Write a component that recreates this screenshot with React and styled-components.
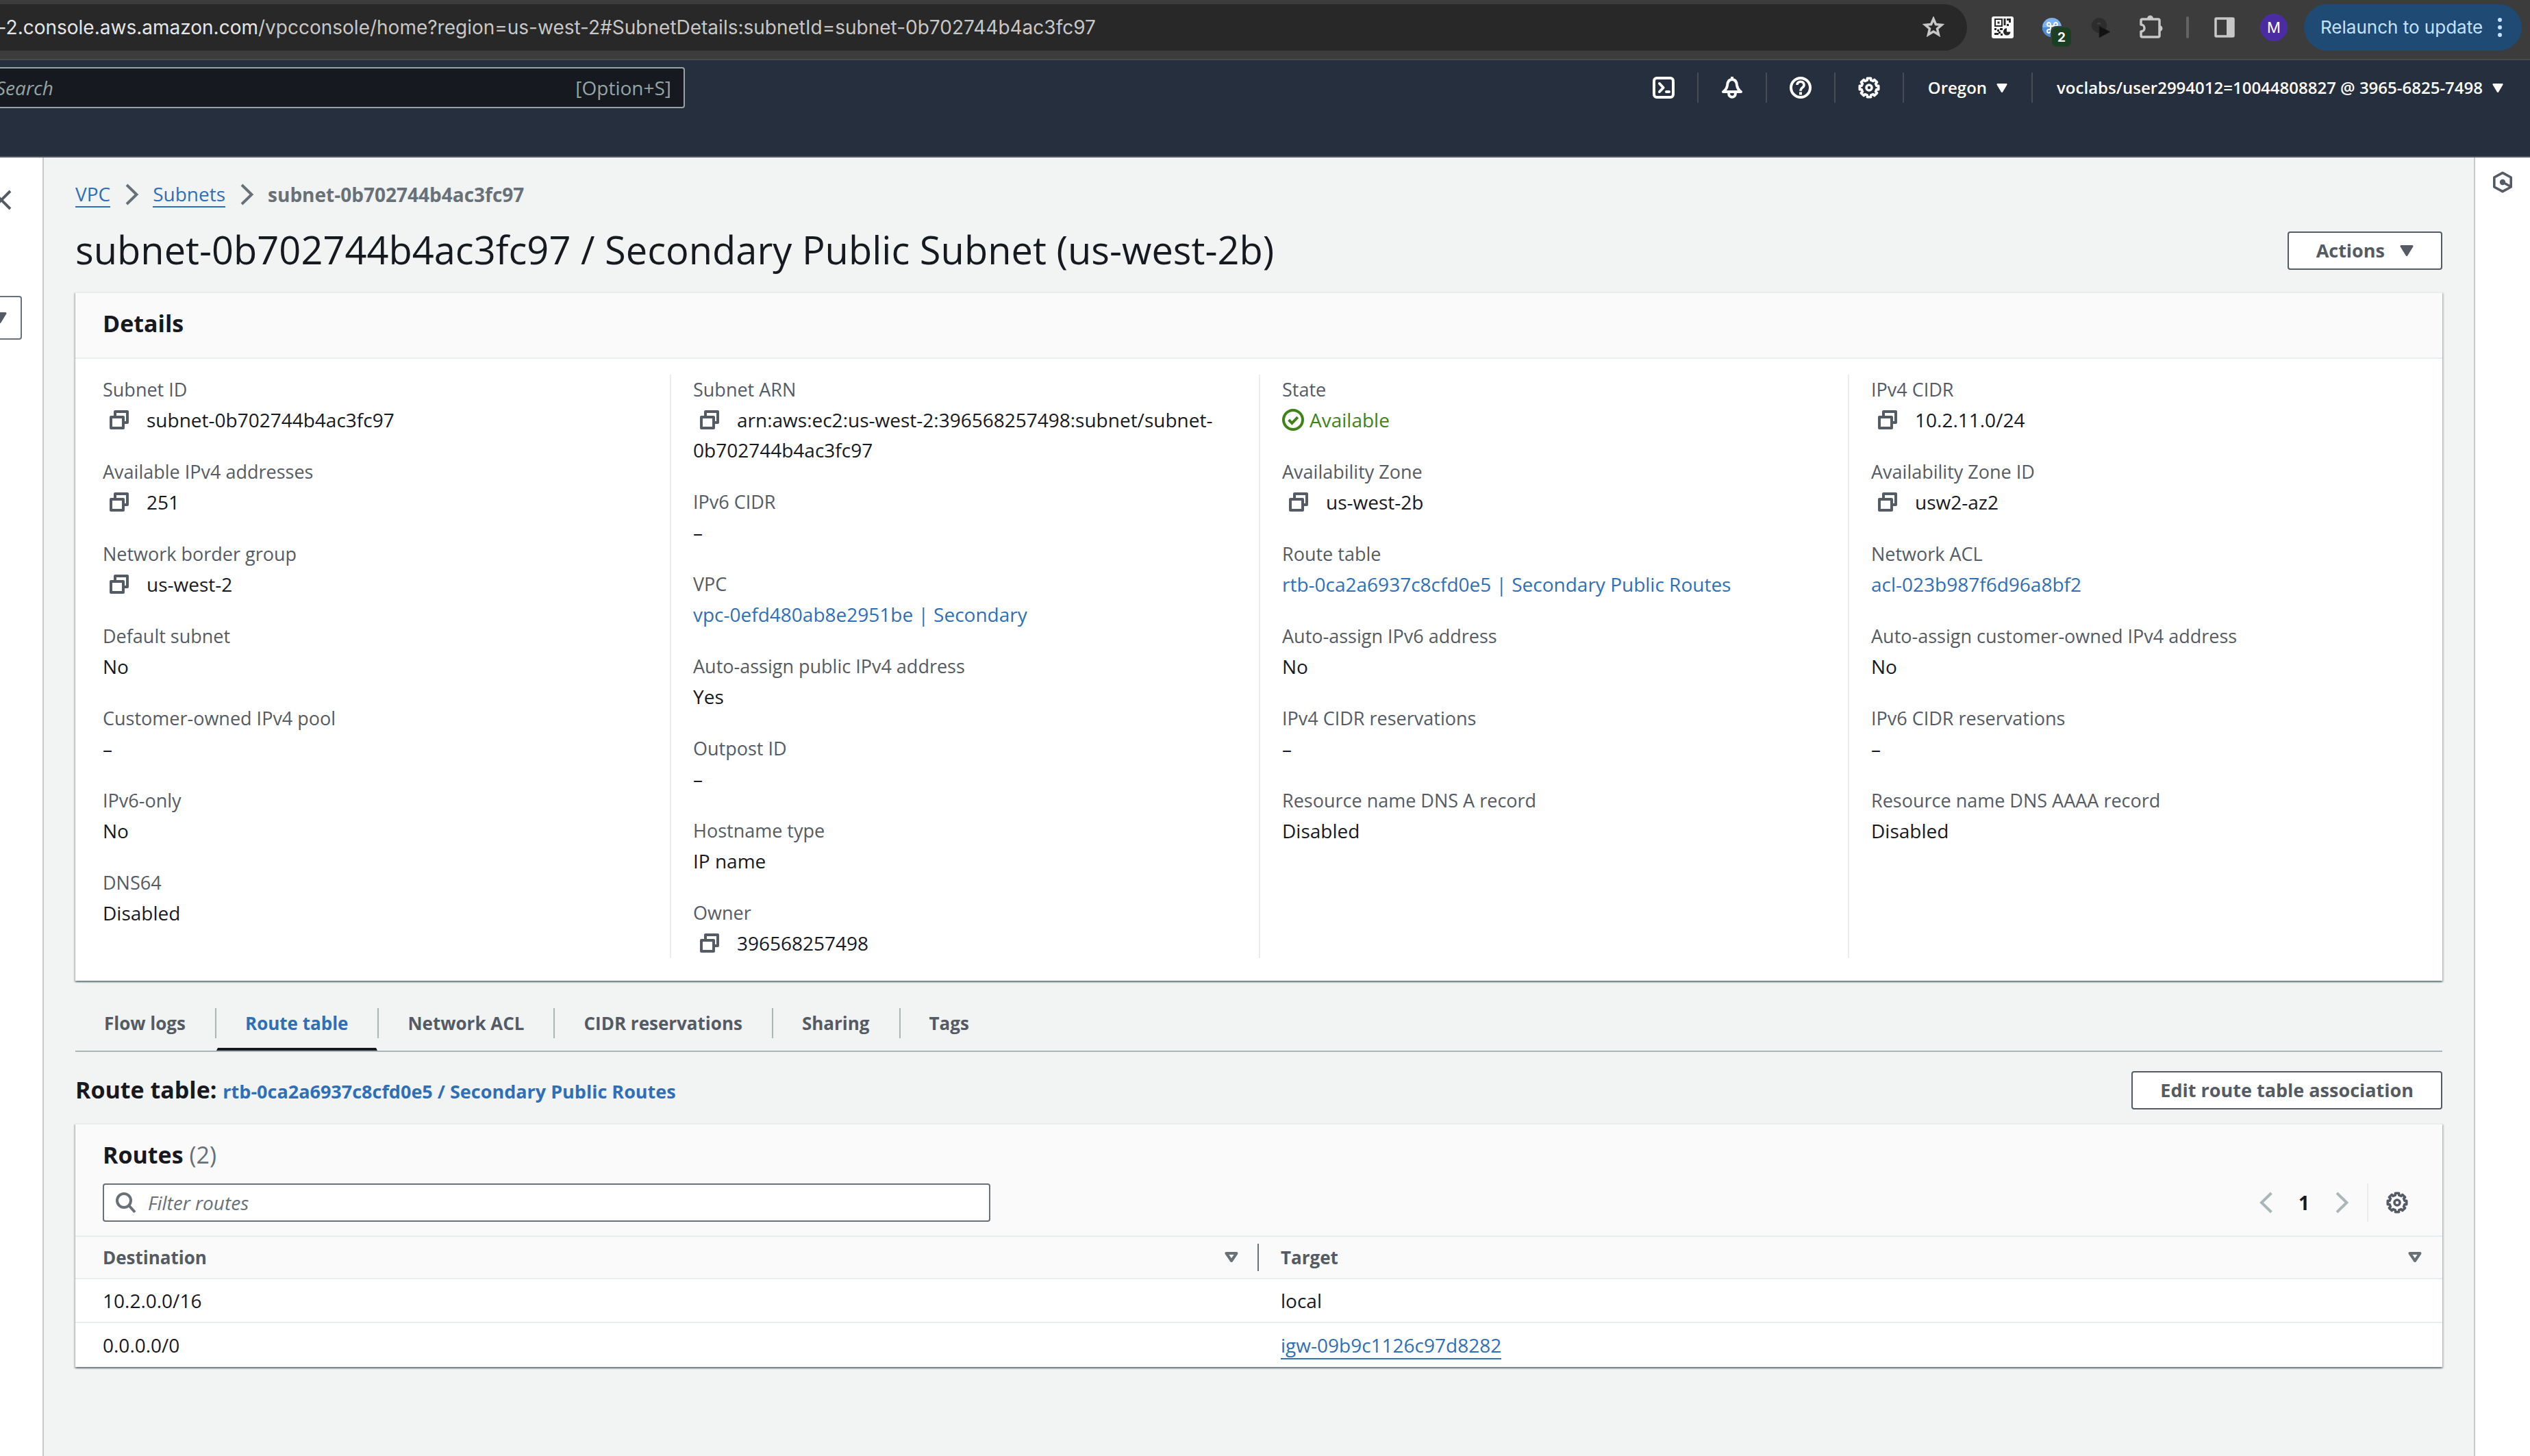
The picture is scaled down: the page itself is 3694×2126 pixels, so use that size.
import React from "react";
import styled, { createGlobalStyle } from "styled-components";

const ui = `"Open Sans", "Noto Sans", sans-serif`;
const chrome = `Inter, Roboto, sans-serif`;
const c = {
  ink: "#16191f",
  label: "#545b64",
  muted: "#687078",
  link: "#2e6fb7",
  line: "#eaeded",
  rule: "#aab7b8",
  page: "#f2f3f3",
  panel: "#fafafa",
  nav: "#252f3e",
  green: "#3d8317",
};

const Global = createGlobalStyle`
  *, *::before, *::after { box-sizing: border-box; }
  body { margin: 0; font: 400 28px/44px ${ui}; color: ${c.ink}; background: ${c.page}; }
  button, input, select { font: inherit; color: inherit; }
  button { cursor: pointer; }
  h1, h2, h3, dl, dd, ol, ul { margin: 0; padding: 0; }
  ol, ul { list-style: none; }
`;

const Shell = styled.div`
  min-height: 100vh;
  display: flex;
  flex-direction: column;
  overflow-x: hidden;
`;

/* ---------- Browser bar ---------- */
const BrowserBar = styled.header`
  display: flex;
  align-items: center;
  height: 88px;
  padding: 0 12px 6px 0;
  background: #3c3c3c;
  border-bottom: 2px solid #4a4a47;
  font-family: ${chrome};
`;
const AddressBar = styled.div`
  flex: 1;
  min-width: 0;
  display: flex;
  align-items: center;
  justify-content: space-between;
  height: 68px;
  margin-right: 16px;
  padding-right: 32px;
  background: #282828;
  border-radius: 0 34px 34px 0;
`;
const Url = styled.div`
  margin-left: -12px;
  white-space: nowrap;
  color: #c7c7c7;
`;
const Host = styled.span`
  color: #e6e6e6;
`;
const PlainButton = styled.button`
  display: flex;
  align-items: center;
  justify-content: center;
  padding: 0;
  border: 0;
  background: none;
  color: ${(p) => p.$color || "inherit"};
`;
const Slot = styled(PlainButton)`
  width: 72px;
  height: 68px;
  flex: none;
`;
const BarDivider = styled.span`
  width: 4px;
  height: 32px;
  margin: 0 16px;
  border-radius: 2px;
  background: #636363;
`;
const Avatar = styled.span`
  width: 40px;
  height: 40px;
  border-radius: 50%;
  background: #4b2ca3;
  color: #fff;
  font-size: 22px;
  line-height: 40px;
`;
const Relaunch = styled.button`
  display: flex;
  align-items: center;
  justify-content: space-between;
  width: 318px;
  height: 68px;
  margin-left: 8px;
  padding: 0 28px 0 24px;
  border: 0;
  border-radius: 34px;
  background: #1f4a73;
  color: #c2e2ff;
  font-size: 26px;
  white-space: nowrap;
`;

/* ---------- Console navigation ---------- */
const ConsoleNav = styled.nav`
  display: flex;
  align-items: flex-start;
  justify-content: space-between;
  height: 142px;
  padding-right: 4px;
  background: ${c.nav};
  border-bottom: 2px solid ${c.label};
  color: #fff;
`;
const GlobalSearch = styled.label`
  display: flex;
  align-items: center;
  width: 1060px;
  height: 60px;
  margin: 10px 0 0 -60px;
  padding: 0 18px 0 52px;
  border: 2px solid #95a5a6;
  border-radius: 4px;
  background: ${c.ink};
  color: #95a5a6;
`;
const BareInput = styled.input`
  flex: 1;
  min-width: 0;
  padding: 0;
  border: 0;
  outline: 0;
  background: none;
  &::placeholder {
    color: ${(p) => p.$hint};
    font-style: italic;
    opacity: 1;
  }
`;
const NavItems = styled.div`
  display: flex;
  align-items: center;
  height: 80px;
`;
const NavButton = styled(PlainButton)`
  gap: 14px;
  height: 44px;
  padding: 0 ${(p) => (p.$wide ? 35 : 33)}px;
  font-size: 24px;
  font-weight: 600;
  white-space: nowrap;
  & + & {
    border-left: 2px solid #474c55;
  }
`;

/* ---------- Page frame ---------- */
const Body = styled.div`
  flex: 1;
  display: flex;
`;
const SidePanel = styled.aside`
  width: 64px;
  flex: none;
  display: flex;
  flex-direction: column;
  align-items: flex-end;
  gap: 124px;
  padding: 46px 30px 0 0;
  overflow: hidden;
  background: #fff;
  border-right: 2px solid #c5c9ca;
`;
const CloseButton = styled(PlainButton)`
  margin-right: 14px;
`;
const ScopeField = styled.div`
  flex: none;
  display: grid;
  align-items: center;
  justify-items: end;
  width: 300px;
  height: 64px;
  color: ${c.label};
  & > * {
    grid-area: 1 / 1;
  }
  & > svg {
    margin-right: 22px;
    pointer-events: none;
  }
`;
const ScopeSelect = styled.select`
  width: 100%;
  height: 64px;
  padding: 0 60px 0 20px;
  appearance: none;
  border: 2px solid ${c.muted};
  border-radius: 4px;
  background: #fff;
`;
const HelpPanel = styled.aside`
  width: 82px;
  flex: none;
  display: flex;
  justify-content: center;
  align-items: flex-start;
  padding-top: 20px;
  background: #fff;
  border-left: 2px solid #c5c9ca;
  color: ${c.label};
`;
const Main = styled.main`
  flex: 1;
  min-width: 0;
  padding: 32px 46px;
`;
const Trail = styled.ol`
  display: flex;
  align-items: center;
  gap: 14px;
`;
const Crumb = styled.li`
  display: flex;
  align-items: center;
  gap: 16px;
  color: ${c.muted};
`;
const Current = styled.span`
  font-weight: 700;
`;
const Link = styled.a`
  color: ${c.link};
  text-decoration: none;
`;
const UnderLink = styled(Link)`
  line-height: 36px;
  border-bottom: 2px solid currentColor;
`;
const HeaderRow = styled.div`
  display: flex;
  align-items: center;
  justify-content: space-between;
  margin: ${(p) => p.$margin};
`;
const PageTitle = styled.h1`
  padding-bottom: 4px;
  font-size: 56px;
  line-height: 64px;
  font-weight: 400;
`;
const OutlineButton = styled.button`
  display: flex;
  align-items: center;
  gap: 22px;
  height: 56px;
  padding: 0 40px;
  border: 2px solid ${c.label};
  border-radius: 4px;
  background: #fff;
  color: ${c.label};
  font-size: 27px;
  font-weight: 700;
  white-space: nowrap;
`;

/* ---------- Cards ---------- */
const Card = styled.section`
  background: #fff;
  border-top: 2px solid ${c.line};
  box-shadow: 0 2px 2px 0 rgba(0, 28, 36, 0.4), 2px 2px 2px 0 rgba(0, 28, 36, 0.15),
    -2px 2px 2px 0 rgba(0, 28, 36, 0.15);
`;
const CardHeader = styled.div`
  padding: 22px 40px ${(p) => p.$bottom}px;
  background: ${c.panel};
  border-bottom: 2px solid ${c.line};
`;
const CardTitle = styled.h2`
  font-size: 34px;
  line-height: 44px;
  font-weight: 700;
`;
const Count = styled.span`
  color: ${c.muted};
  font-weight: 400;
`;
const Columns = styled.div`
  display: grid;
  grid-template-columns: repeat(4, 1fr);
  padding: 23px 8px 33px;
`;
const Column = styled.dl`
  display: flex;
  flex-direction: column;
  gap: 32px;
  padding: 0 30px 0 32px;
  & + & {
    border-left: 2px solid ${c.line};
  }
`;
const Term = styled.dt`
  color: ${c.label};
  font-size: 27px;
`;
const CopyButton = styled.button`
  width: 32px;
  height: 32px;
  margin: 0 24px 0 8px;
  padding: 0;
  border: 0;
  background: none;
  color: ${c.label};
  vertical-align: -5px;
`;
const Status = styled.span`
  display: flex;
  align-items: center;
  gap: 8px;
  color: ${c.green};
`;

/* ---------- Tabs ---------- */
const TabList = styled.div`
  display: flex;
  align-items: center;
  height: 82px;
  margin-top: 22px;
  border-bottom: 2px solid ${c.rule};
`;
const Tab = styled.button`
  height: 80px;
  padding: 4px 41px 0 40px;
  border: solid transparent;
  border-width: 0 2px 4px;
  border-bottom-color: ${(p) => (p["aria-selected"] ? c.ink : "transparent")};
  background: none;
  color: ${(p) => (p["aria-selected"] ? c.link : c.label)};
  font-size: 26px;
  font-weight: 700;
`;
const TabDivider = styled.span`
  width: 2px;
  height: 44px;
  background: ${c.rule};
`;

/* ---------- Routes ---------- */
const RouteLink = styled(Link)`
  font-size: 27px;
`;
const Tools = styled.div`
  display: flex;
  align-items: center;
  justify-content: space-between;
  margin-top: 20px;
`;
const FilterBox = styled.label`
  display: flex;
  align-items: center;
  gap: 16px;
  width: 1296px;
  height: 56px;
  padding: 0 16px;
  border: 2px solid ${c.muted};
  border-radius: 4px;
  background: #fff;
  color: ${c.muted};
`;
const Pager = styled.div`
  display: flex;
  align-items: center;
  padding-right: 10px;
`;
const PageNumber = styled(PlainButton)`
  width: 80px;
  font-weight: 700;
`;
const PagerDivider = styled.span`
  width: 2px;
  height: 56px;
  margin: 0 26px 0 20px;
  background: ${c.line};
`;
const Table = styled.table`
  width: 100%;
  table-layout: fixed;
  border-spacing: 0;
`;
const HeadCell = styled.th`
  padding: 0 0 0 ${(p) => (p.$first ? 40 : 32)}px;
  background: ${c.panel};
  border-bottom: 2px solid ${c.line};
`;
const HeadInner = styled.div`
  display: flex;
  align-items: center;
  justify-content: space-between;
  height: 60px;
  font-size: 26px;
  font-weight: 700;
  color: ${c.label};
`;
const SortButton = styled(PlainButton)`
  height: 40px;
  padding-right: 28px;
  border-right: 2px solid ${(p) => (p.$ruled ? c.muted : "transparent")};
  color: ${c.muted};
`;
const Cell = styled.td`
  height: 64px;
  padding: 0 32px 0 ${(p) => (p.$first ? 40 : 32)}px;
  border-bottom: 2px solid ${c.line};
  tr:last-child > & {
    border-bottom: 0;
  }
`;

/* ---------- Icons ---------- */
const Svg = styled.svg`
  display: block;
  flex: none;
  fill: none;
  stroke: currentColor;
`;
function Icon({ children, size = 32, stroke = 2 }) {
  return (
    <Svg width={size} height={size} viewBox="0 0 16 16" strokeWidth={stroke} aria-hidden="true">
      {children}
    </Svg>
  );
}
const CopyIcon = () => (
  <Icon>
    <path d="M2 6h9v8H2zM5 6V2h9v8h-3" strokeLinejoin="round" />
  </Icon>
);
const Chevron = ({ left }) => (
  <Icon>
    <path d={left ? "M12.2 1 5 8l7.2 7" : "M4 1l7.200 7L4 15"} />
  </Icon>
);
const Caret = ({ w, h }) => (
  <Svg width={w} height={h} viewBox="0 0 20 16" aria-hidden="true" preserveAspectRatio="none">
    <path d="M2 1.500h16L10 14.500z" fill="currentColor" strokeWidth="3" strokeLinejoin="round" />
  </Svg>
);
const SortIcon = () => (
  <Svg width="20" height="16" viewBox="0 0 20 16" aria-hidden="true">
    <path d="M2.500 2h15L10 13z" strokeWidth="4" strokeLinejoin="round" />
  </Svg>
);
const gearPath = (() => {
  const pts = [];
  for (let i = 0; i < 8; i += 1) {
    const a = (i * Math.PI) / 4;
    [[-0.24, 5.6], [-0.19, 7], [0.19, 7], [0.24, 5.6]].forEach(([d, r]) => {
      pts.push(`${(8 + r * Math.sin(a + d)).toFixed(2)} ${(8 - r * Math.cos(a + d)).toFixed(2)}`);
    });
  }
  return `M${pts.join("L")}Z`;
})();
const Gear = () => (
  <Icon stroke={1.8}>
    <path d={gearPath} strokeLinejoin="round" />
    <circle cx="8" cy="8" r="2" />
  </Icon>
);
const Terminal = () => (
  <Icon>
    <rect x="1" y="1" width="14" height="14" rx="2" />
    <path d="M5 5l2.800 3L5 11M10 11h2" strokeLinecap="round" strokeLinejoin="round" />
  </Icon>
);
const Bell = () => (
  <Icon>
    <path d="M8 0v2M8 2C5.600 2 4.700 4 4.500 6.200 4.200 8.500 3 9.900 1.500 11h13c-1.500-1.100-2.700-2.500-3-4.800C11.300 4 10.400 2 8 2zM5.600 11.500v1a2.400 2.400 0 0 0 4.800 0v-1" strokeLinejoin="round" />
  </Icon>
);
const Help = () => (
  <Icon>
    <circle cx="8" cy="8" r="7" />
    <path d="M5.500 6a2.500 2.300 0 1 1 4.100 1.700C8.600 8.500 8 8.900 8 10.400" strokeWidth="1.800" />
    <path d="M8 11.200v2" />
  </Icon>
);
const Check = () => (
  <Icon>
    <circle cx="8" cy="8" r="7" />
    <path d="M4.800 8l2.400 2.400 4.200-4.300" />
  </Icon>
);
const SearchIcon = () => (
  <Icon>
    <circle cx="6.500" cy="6.500" r="5" />
    <path d="M10 10l4.500 5" />
  </Icon>
);
const Cross = () => (
  <Icon>
    <path d="M1.500 1.500l13 13M14.500 1.500l-13 13" />
  </Icon>
);
const Hexagon = () => (
  <Icon stroke={1.8}>
    <path d="M8 1.200l6.100 3.300v7L8 14.800 1.900 11.500v-7z" strokeLinejoin="round" />
    <circle cx="8" cy="8" r="1.200" fill="currentColor" />
    <path d="M8 8l5.500 3" />
  </Icon>
);
const Star = () => (
  <Svg width="34" height="32" viewBox="0 0 34 32" aria-hidden="true">
    <path d="M17 3.500l3.400 8 8.700.8-6.600 5.700 2 8.500-7.500-4.500-7.500 4.500 2-8.500-6.600-5.700 8.700-.8z" strokeWidth="3.500" />
  </Svg>
);
const QrIcon = () => (
  <Svg width="32" height="32" viewBox="0 0 32 32" aria-hidden="true">
    <g stroke="none">
      <rect width="32" height="32" rx="3" fill="#fbfbfb" />
      <g fill="#282828">
        <path d="M4 3h12v12H4zM6 5v8h8V5z" fillRule="evenodd" />
        <path d="M8.500 7.500h3v3h-3zM17.500 3h3v10h-3zM22 3h6v6h-3V6h-3zM22 11h3v3h-3zM4 17h3v3H4zM8 19h3v3H8zM12 17h4v3h-4zM4 24h6v3H4zM10 22h3v3h-3zM13 25h3v3h-3z" />
        <path d="M22 17a5.300 5.300 0 1 0 5.500 5.500H22z" />
      </g>
    </g>
  </Svg>
);
const CommandIcon = () => (
  <Svg width="56" height="56" viewBox="-12 -12 56 56" aria-hidden="true">
    <circle cx="16" cy="16" r="14" fill="#7db2ee" stroke="none" />
    <path d="M2 16a14 14 0 0 0 28 0z" fill="#4f8bd6" stroke="none" />
    <path d="M14 14h5v5h-5zM14 14h-3a2.500 2.500 0 1 1 3-3zM19 14v-3a2.500 2.500 0 1 1 3 3zM14 19v3a2.500 2.500 0 1 1-3-3z" stroke="#fff" strokeWidth="2" />
    <rect x="14" y="14" width="31" height="31" rx="8" fill="#3c3c3c" stroke="none" />
    <rect x="16" y="16" width="28" height="28" rx="7" fill="#1b3f22" stroke="none" />
    <text x="30" y="37" textAnchor="middle" fontSize="19" fontWeight="700" fontFamily="Inter, sans-serif" fill="#fff" stroke="none">2</text>
  </Svg>
);
const PlayExtension = () => (
  <Svg width="32" height="32" viewBox="0 0 32 32" aria-hidden="true">
    <circle cx="13" cy="13" r="11" fill="#2d2d2d" stroke="none" />
    <path d="M10 11q3-2 5 0" stroke="#444" strokeWidth="2" />
    <path d="M13 14v17l16-8.500z" fill="#121212" stroke="#222" strokeWidth="1" />
  </Svg>
);
const Puzzle = () => (
  <Svg width="36" height="36" viewBox="0 0 36 36" aria-hidden="true">
    <path d="M6 6h23a2 2 0 0 1 2 2v22a2 2 0 0 1-2 2H6a2 2 0 0 1-2-2v-6a5 5 0 0 0 0-10V8a2 2 0 0 1 2-2z" strokeWidth="3.500" strokeLinejoin="round" />
    <path d="M13 5a4 4 0 0 1 9 0zM31 15a4 4 0 0 1 0 9z" fill="currentColor" stroke="none" />
  </Svg>
);
const PanelIcon = () => (
  <Svg width="30" height="30" viewBox="0 0 30 30" aria-hidden="true">
    <rect x="2" y="2" width="26" height="26" rx="1" strokeWidth="3.500" />
    <path d="M18 2h10v26H18z" fill="currentColor" stroke="none" />
  </Svg>
);
const Dots = () => (
  <Svg width="8" height="28" viewBox="0 0 8 28" aria-hidden="true">
    <g fill="currentColor" stroke="none">
      <circle cx="4" cy="3" r="3" />
      <circle cx="4" cy="14" r="3" />
      <circle cx="4" cy="25" r="3" />
    </g>
  </Svg>
);

/* ---------- Data ---------- */
const columns = [
  [
    { label: "Subnet ID", value: "subnet-0b702744b4ac3fc97", copy: true },
    { label: "Available IPv4 addresses", value: "251", copy: true },
    { label: "Network border group", value: "us-west-2", copy: true },
    { label: "Default subnet", value: "No" },
    { label: "Customer-owned IPv4 pool", value: "–" },
    { label: "IPv6-only", value: "No" },
    { label: "DNS64", value: "Disabled" },
  ],
  [
    { label: "Subnet ARN", value: "arn:aws:ec2:us-west-2:396568257498:subnet/subnet-0b702744b4ac3fc97", copy: true },
    { label: "IPv6 CIDR", value: "–" },
    { label: "VPC", value: "vpc-0efd480ab8e2951be | Secondary", link: true },
    { label: "Auto-assign public IPv4 address", value: "Yes" },
    { label: "Outpost ID", value: "–" },
    { label: "Hostname type", value: "IP name" },
    { label: "Owner", value: "396568257498", copy: true },
  ],
  [
    { label: "State", value: "Available", status: true },
    { label: "Availability Zone", value: "us-west-2b", copy: true },
    { label: "Route table", value: "rtb-0ca2a6937c8cfd0e5 | Secondary Public Routes", link: true },
    { label: "Auto-assign IPv6 address", value: "No" },
    { label: "IPv4 CIDR reservations", value: "–" },
    { label: "Resource name DNS A record", value: "Disabled" },
  ],
  [
    { label: "IPv4 CIDR", value: "10.2.11.0/24", copy: true },
    { label: "Availability Zone ID", value: "usw2-az2", copy: true },
    { label: "Network ACL", value: "acl-023b987f6d96a8bf2", link: true },
    { label: "Auto-assign customer-owned IPv4 address", value: "No" },
    { label: "IPv6 CIDR reservations", value: "–" },
    { label: "Resource name DNS AAAA record", value: "Disabled" },
  ],
];
const tabs = ["Flow logs", "Route table", "Network ACL", "CIDR reservations", "Sharing", "Tags"];
const routes = [
  { destination: "10.2.0.0/16", target: "local" },
  { destination: "0.0.0.0/0", target: "igw-09b9c1126c97d8282", link: true },
];

function Field({ item }) {
  let value = item.value;
  if (item.link) value = <Link href="#">{item.value}</Link>;
  if (item.status) value = <Status><Check />{item.value}</Status>;
  return (
    <div>
      <Term>{item.label}</Term>
      <dd>
        {item.copy && <CopyButton type="button" aria-label={`Copy ${item.label}`}><CopyIcon /></CopyButton>}
        {value}
      </dd>
    </div>
  );
}

export default function App() {
  return (
    <Shell>
      <Global />
      <BrowserBar>
        <AddressBar>
          <Url>
            <Host>t-2.console.aws.amazon.com</Host>
            /vpcconsole/home?region=us-west-2#SubnetDetails:subnetId=subnet-0b702744b4ac3fc97
          </Url>
          <PlainButton type="button" aria-label="Bookmark" $color="#c7c7c7"><Star /></PlainButton>
        </AddressBar>
        <Slot type="button" aria-label="QR code"><QrIcon /></Slot>
        <Slot type="button" aria-label="Shortcuts"><CommandIcon /></Slot>
        <Slot type="button" aria-label="Player"><PlayExtension /></Slot>
        <Slot type="button" aria-label="Extensions" $color="#c7c7c7"><Puzzle /></Slot>
        <BarDivider />
        <Slot type="button" aria-label="Side panel" $color="#c7c7c7"><PanelIcon /></Slot>
        <Slot type="button" aria-label="Profile"><Avatar>M</Avatar></Slot>
        <Relaunch type="button">Relaunch to update<Dots /></Relaunch>
      </BrowserBar>

      <ConsoleNav>
        <GlobalSearch>
          <BareInput type="text" aria-label="Search" placeholder="Search" $hint="#95a5a6" />
          [Option+S]
        </GlobalSearch>
        <NavItems>
          <NavButton type="button" aria-label="CloudShell"><Terminal /></NavButton>
          <NavButton type="button" aria-label="Notifications"><Bell /></NavButton>
          <NavButton type="button" aria-label="Support"><Help /></NavButton>
          <NavButton type="button" aria-label="Settings"><Gear /></NavButton>
          <NavButton type="button" $wide>Oregon<Caret w={16} h={13} /></NavButton>
          <NavButton type="button" $wide>voclabs/user2994012=10044808827 @ 3965-6825-7498<Caret w={16} h={13} /></NavButton>
        </NavItems>
      </ConsoleNav>

      <Body>
        <SidePanel>
          <CloseButton type="button" aria-label="Close navigation" $color={c.label}><Cross /></CloseButton>
          <ScopeField>
            <ScopeSelect aria-label="Filter by VPC" defaultValue=""><option value="" /></ScopeSelect>
            <Caret w={20} h={16} />
          </ScopeField>
        </SidePanel>

        <Main>
          <nav aria-label="Breadcrumbs">
            <Trail>
              <Crumb><UnderLink href="#">VPC</UnderLink><Chevron /></Crumb>
              <Crumb><UnderLink href="#">Subnets</UnderLink><Chevron /></Crumb>
              <Crumb><Current>subnet-0b702744b4ac3fc97</Current></Crumb>
            </Trail>
          </nav>
          <HeaderRow $margin="26px 0">
            <PageTitle>subnet-0b702744b4ac3fc97 / Secondary Public Subnet (us-west-2b)</PageTitle>
            <OutlineButton type="button">Actions<Caret w={20} h={16} /></OutlineButton>
          </HeaderRow>

          <Card>
            <CardHeader $bottom={28}><CardTitle>Details</CardTitle></CardHeader>
            <Columns>
              {columns.map((items) => (
                <Column key={items[0].label}>
                  {items.map((item) => <Field key={item.label} item={item} />)}
                </Column>
              ))}
            </Columns>
          </Card>

          <TabList role="tablist">
            {tabs.map((name, i) => (
              <React.Fragment key={name}>
                {i > 0 && <TabDivider />}
                <Tab type="button" role="tab" aria-selected={name === "Route table"}>{name}</Tab>
              </React.Fragment>
            ))}
          </TabList>

          <HeaderRow $margin="28px 0 20px">
            <CardTitle>
              Route table: <RouteLink href="#">rtb-0ca2a6937c8cfd0e5 / Secondary Public Routes</RouteLink>
            </CardTitle>
            <OutlineButton type="button">Edit route table association</OutlineButton>
          </HeaderRow>

          <Card>
            <CardHeader $bottom={20}>
              <CardTitle>Routes <Count>(2)</Count></CardTitle>
              <Tools>
                <FilterBox>
                  <SearchIcon />
                  <BareInput type="text" aria-label="Filter routes" placeholder="Filter routes" $hint={c.muted} />
                </FilterBox>
                <Pager>
                  <PlainButton type="button" aria-label="Previous page" $color={c.rule}><Chevron left /></PlainButton>
                  <PageNumber type="button">1</PageNumber>
                  <PlainButton type="button" aria-label="Next page" $color={c.rule}><Chevron /></PlainButton>
                  <PagerDivider />
                  <PlainButton type="button" aria-label="Preferences" $color={c.label}><Gear /></PlainButton>
                </Pager>
              </Tools>
            </CardHeader>
            <Table>
              <thead>
                <tr>
                  {["Destination", "Target"].map((name, i) => (
                    <HeadCell key={name} scope="col" $first={i === 0}>
                      <HeadInner>
                        {name}
                        <SortButton type="button" aria-label={`Sort by ${name}`} $ruled={i === 0}><SortIcon /></SortButton>
                      </HeadInner>
                    </HeadCell>
                  ))}
                </tr>
              </thead>
              <tbody>
                {routes.map((r) => (
                  <tr key={r.destination}>
                    <Cell $first>{r.destination}</Cell>
                    <Cell>{r.link ? <UnderLink href="#">{r.target}</UnderLink> : r.target}</Cell>
                  </tr>
                ))}
              </tbody>
            </Table>
          </Card>
        </Main>

        <HelpPanel>
          <PlainButton type="button" aria-label="Open details panel"><Hexagon /></PlainButton>
        </HelpPanel>
      </Body>
    </Shell>
  );
}
